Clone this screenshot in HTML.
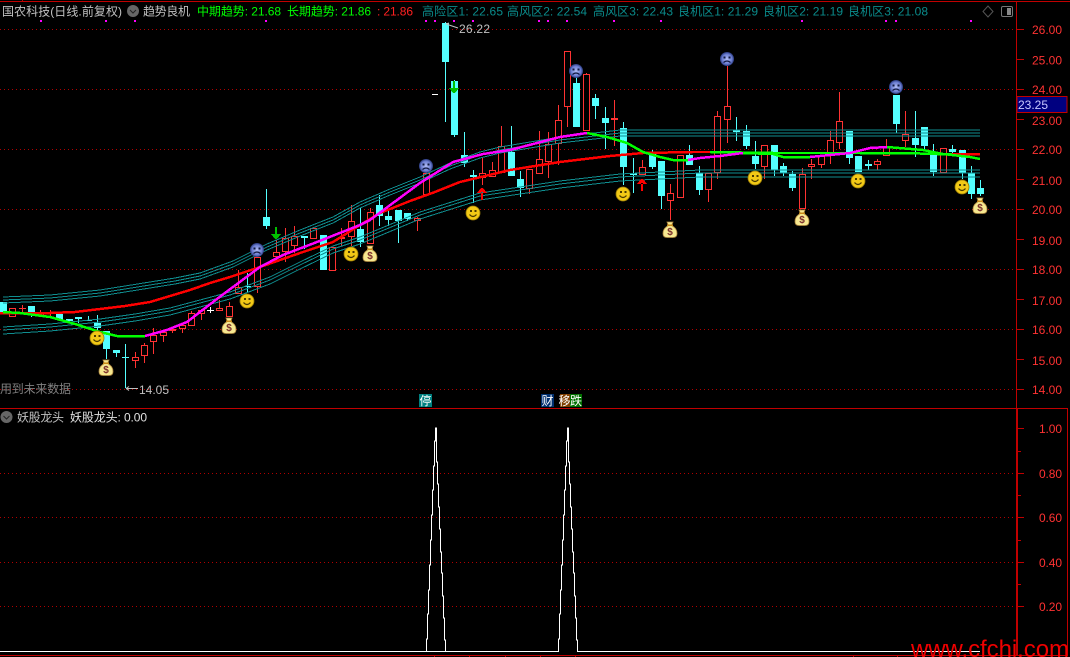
<!DOCTYPE html>
<html><head><meta charset="utf-8"><style>
html,body{margin:0;padding:0;background:#000;width:1070px;height:657px;overflow:hidden}
svg{display:block}
text{font-family:"Liberation Sans","WenQuanYi Zen Hei","Noto Sans CJK SC",sans-serif;font-size:12px}
.c{shape-rendering:crispEdges}
</style></head><body>
<svg width="1070" height="657" viewBox="0 0 1070 657" xmlns="http://www.w3.org/2000/svg">
<defs>
<radialGradient id="sad"><stop offset="0" stop-color="#b0bcf4"/><stop offset=".7" stop-color="#6a7cd0"/><stop offset="1" stop-color="#28387c"/></radialGradient>
<g id="smile"><circle r="7" fill="#f2c916" stroke="#9a7c06" stroke-width=".8"/><rect x="-3" y="-3" width="2" height="2" fill="#4a3a00"/><rect x="1.5" y="-3" width="2" height="2" fill="#4a3a00"/><path d="M-3.5 1.5Q0 5.5 3.5 1.5" fill="none" stroke="#4a3a00" stroke-width="1.2"/></g>
<g id="sadf"><circle r="7" fill="url(#sad)"/><rect x="-3.5" y="-2.5" width="2" height="2" fill="#101840"/><rect x="1.5" y="-2.5" width="2" height="2" fill="#101840"/><path d="M-3.5 3.5Q0 .5 3.5 3.5" fill="none" stroke="#101840" stroke-width="1.2"/></g>
<g id="bag"><path d="M-3-8h6l-1.5 3.5Q7-2 7 3.5 7 7.5 3 7.500h-6Q-7 7.500-7 3.500-7-2-1.500-4.500z" fill="#f6e890" stroke="#b08840" stroke-width=".8"/><rect x="-3" y="-5.500" width="6" height="1.500" fill="#c88a18"/><text x="0" y="5" text-anchor="middle" fill="#7a2c2c" style="font-size:10px;font-weight:bold">$</text></g>
<path id="up" d="M3 300L50 298L100 293L125 289L150 285L175 281L200 276L233 264L267 247L300 233L333 220L360 205L390 192L420 180L450 166L480 155L500 150L560 140L620 133L700 133L980 133" fill="none"/>
<path id="lo" d="M3 330L50 327L100 322L135 317L170 311L200 303L230 295L270 280L300 265L333 249L360 240L420 215L480 196L560 184L620 177L700 173L980 173" fill="none"/>
<g id="peak"><path d="M0 651.500H426.500V639H427.500V614H428.500V590H429.500V565H430.500V540H431.500V515H432.500V490H433.500V466H434.500V441H435.500V428H436.500V462H437.500V484H438.500V507H439.500V529H440.500V552H441.500V573H442.500V596H443.500V618H444.500V640H445.500V651.500" fill="none" stroke="#fff" stroke-width="1"/></g>
</defs>
<rect width="1070" height="657" fill="#000"/>
<!-- dotted grid -->
<g class="c" stroke="#b00000" stroke-dasharray="1 3" stroke-width="1">
<path d="M0 29.500H1016M0 89.500H1016M0 149.500H1016M0 209.500H1016M0 269.500H1016M0 329.500H1016M0 389.500H1016M0 473.500H1016M0 517.500H1016M0 562.500H1016M0 606.500H1016"/>
</g>
<!-- frame -->
<g class="c" fill="#c00000">
<rect x="0" y="1" width="1070" height="1"/><rect x="22" y="0" width="1" height="1"/>
<rect x="0" y="408" width="1068" height="1"/><rect x="0" y="655" width="1068" height="1"/>
<rect x="1016" y="2" width="1" height="406"/><rect x="1017" y="408" width="1" height="248"/><rect x="1016" y="408" width="1" height="248"/>
<rect x="1067" y="408" width="1" height="248"/>
<path d="M1017 29h7v1h-7zM1017 59h7v1h-7zM1017 89h7v1h-7zM1017 119h7v1h-7zM1017 149h7v1h-7zM1017 179h7v1h-7zM1017 209h7v1h-7zM1017 239h7v1h-7zM1017 269h7v1h-7zM1017 299h7v1h-7zM1017 329h7v1h-7zM1017 359h7v1h-7zM1017 389h7v1h-7z"/>
<path d="M1018 428h6v1h-6zM1018 473h6v1h-6zM1018 517h6v1h-6zM1018 562h6v1h-6zM1018 606h6v1h-6zM1018 451h3v1h-3zM1018 495h3v1h-3zM1018 540h3v1h-3zM1018 584h3v1h-3z"/>
<path d="M434 656h1v1h-1zM469 656h1v1h-1zM505 656h1v1h-1zM540 656h1v1h-1zM575 656h1v1h-1zM853 656h1v1h-1zM897 656h1v1h-1zM941 656h1v1h-1z"/>
</g>
<!-- magenta markers -->
<g class="c" fill="#ff00ff"><path d="M40 20h2v2h-2zM105 20h2v2h-2zM134 20h2v2h-2zM265 20h2v2h-2zM425 20h2v2h-2zM434 20h2v2h-2zM453 20h2v2h-2zM472 20h2v2h-2zM538 20h2v2h-2zM547 20h2v2h-2zM566 20h2v2h-2zM613 20h2v2h-2zM660 20h2v2h-2zM801 20h2v2h-2zM885 20h2v2h-2zM895 20h2v2h-2zM970 20h2v2h-2z"/></g>
<!-- cyan wicks -->
<g class="c" stroke="#54ffff" stroke-width="1" fill="none">
<path d="M31.500 306V317M59.500 314V320M69.500 319V323M78.500 317V323M88.500 316V320M97.500 315V330M106.500 331V359M116.500 350V357M125.500 344V388M247.500 273V292M266.500 189V229M304.500 237V249M323.500 235V270M360.500 208V247M379.500 195V226M388.500 210V226M398.500 210V243M407.500 213V221M445.500 22V122M454.500 80V137M464.500 132V167M473.500 170V203M511.500 126V176M520.500 171V197M576.500 65V127M595.500 94V119M605.500 107V149M623.500 122V185M633.500 158V193M652.500 150V169M661.500 161V209M689.500 145V165M699.500 166V195M736.500 117V141M746.500 125V149M755.500 141V169M774.500 145V176M783.500 163V176M792.500 171V191M849.500 131V164M858.500 156V172M868.500 160V170M896.500 95V133M915.500 111V157M924.500 127V149M933.500 144V176M952.500 145V153M962.500 150V179M971.500 166V199M980.500 180V196"/>
</g>
<!-- cyan bodies -->
<g class="c" fill="#54ffff">
<path d="M0 302h7v12h-7zM28 306h7v8h-7zM56 314h7v6h-7zM66 319h7v2h-7zM75 317h7v2h-7zM85 320h7v1h-7zM94 323h7v5h-7zM103 331h7v18h-7zM113 350h7v3h-7zM122 357h7v1h-7zM244 286h7v1h-7zM263 217h7v9h-7zM301 236h7v2h-7zM320 235h7v35h-7zM357 229h7v13h-7zM376 205h7v11h-7zM385 216h7v4h-7zM395 210h7v11h-7zM404 213h7v6h-7zM442 23h7v39h-7zM451 81h7v54h-7zM461 155h7v8h-7zM470 175h7v2h-7zM508 152h7v24h-7zM517 179h7v9h-7zM573 83h7v44h-7zM592 98h7v8h-7zM602 118h7v5h-7zM620 128h7v39h-7zM630 173h7v2h-7zM649 154h7v13h-7zM658 161h7v35h-7zM686 155h7v10h-7zM696 173h7v17h-7zM733 130h7v2h-7zM743 131h7v15h-7zM752 156h7v8h-7zM771 145h7v25h-7zM780 166h7v7h-7zM789 174h7v14h-7zM846 131h7v27h-7zM855 156h7v16h-7zM865 164h7v2h-7zM893 95h7v29h-7zM912 138h7v7h-7zM921 127h7v19h-7zM930 154h7v18h-7zM949 149h7v3h-7zM959 150h7v23h-7zM968 173h7v21h-7zM977 188h7v6h-7z"/>
</g>
<!-- white marks -->
<g class="c" fill="#fff"><path d="M207 310h7v1h-7zM210 307h1v6h-1zM432 94h6v1h-6z"/></g>
<!-- red wicks -->
<g class="c" stroke="#ff3232" stroke-width="1" fill="none">
<path d="M22.500 305V312M40.500 310V317M50.500 310V317M135.500 352V368M144.500 343V363M153.500 328V354M163.500 330V342M172.500 327V333M182.500 323V333M191.500 311V326M201.500 309V320M219.500 300V311M229.500 302V317M238.500 270V294M257.500 257V293M276.500 240V262M285.500 228V262M294.500 226V253M341.500 228V246M351.500 205V246M370.500 208V244M417.500 217V231M426.500 160V195M482.500 158V185M492.500 162V177M501.500 126V173M529.500 169V194M539.500 131V174M548.500 132V178M558.500 105V165M567.500 51V127M586.500 73V131M614.500 100V146M642.500 160V175M670.500 184V220M708.500 173V202M717.500 111V179M727.500 66V143M764.500 145V179M802.500 168V209M811.500 159V179M821.500 156V168M830.500 131V164M839.500 92V149M877.500 159V170M886.500 139V156M905.500 111V147"/>
<path d="M19 308.500h7M47 313.500h7"/>
</g>
<!-- red bodies -->
<g class="c" stroke="#ff3232" stroke-width="1" fill="#000">
<path d="M9.500 308.500h6v8h-6zM37.500 312.500h6v3h-6zM132.500 357.500h6v3h-6zM141.500 345.500h6v10h-6zM150.500 335.500h6v6h-6zM160.500 332.500h6v3h-6zM169.500 329.500h6v1h-6zM179.500 325.500h6v3h-6zM188.500 313.500h6v12h-6zM198.500 310.500h6v3h-6zM216.500 308.500h6v2h-6zM226.500 306.500h6v10h-6zM235.500 287.500h6v6h-6zM254.500 257.500h6v29h-6zM273.500 252.500h6v4h-6zM282.500 238.500h6v13h-6zM291.500 236.500h6v9h-6zM310.500 228.500h6v10h-6zM329.500 247.500h6v23h-6zM338.500 237.500h6v1h-6zM348.500 221.500h6v15h-6zM367.500 212.500h6v31h-6zM414.500 218.500h6v2h-6zM423.500 173.500h6v21h-6zM479.500 173.500h6v4h-6zM489.500 170.500h6v6h-6zM498.500 146.500h6v26h-6zM526.500 169.500h6v19h-6zM536.500 159.500h6v14h-6zM545.500 144.500h6v17h-6zM555.500 120.500h6v23h-6zM564.500 51.500h6v55h-6zM583.500 74.500h6v56h-6zM611.500 118.500h6v1h-6zM639.500 167.500h6v7h-6zM667.500 193.500h6v7h-6zM677.500 155.500h6v42h-6zM705.500 173.500h6v16h-6zM714.500 116.500h6v56h-6zM724.500 106.500h6v13h-6zM761.500 145.500h6v21h-6zM799.500 174.500h6v34h-6zM808.500 164.500h6v2h-6zM818.500 156.500h6v8h-6zM827.500 140.500h6v14h-6zM836.500 121.500h6v21h-6zM874.500 161.500h6v3h-6zM883.500 146.500h6v9h-6zM902.500 134.500h6v6h-6zM940.500 148.500h6v24h-6z"/>
</g>
<!-- channels -->
<g stroke="#0f8e90" stroke-width="1" class="c">
<use href="#up" y="-3"/><use href="#up"/><use href="#up" y="3"/>
<use href="#lo" y="-3"/><use href="#lo"/><use href="#lo" y="4"/>
</g>
<!-- long trend -->
<g fill="none" stroke-width="2.500" class="c">
<path stroke="#ff0000" d="M0 313L50 313L75 312L100 309L125 306L150 302L170 296L190 290L210 283L230 277L260 267L280 260L300 253L333 242L360 225L380 213L410 201L435 192L460 182L485 176L510 170L560 162L610 156L643 153L693 152L710 152"/>
<path stroke="#00ff00" d="M710 152L773 153L860 153L903 153L937 154L952 154"/>
<path stroke="#ff0000" d="M952 154L980 154"/>
<path stroke="#00ff00" d="M3 312L20 313L50 317L75 324L100 332L117 336L145 336"/>
<path stroke="#ff00ff" d="M145 336L167 330L187 322L213 302L233 287L260 267L283 255L317 242L360 225L370 220L393 203L420 183L453 162L483 154L510 150L560 137L587 133"/>
<path stroke="#00ff00" d="M587 133L607 137L627 143L643 152L660 157L673 160L688 160"/>
<path stroke="#ff00ff" d="M688 160L700 158L720 156L743 153"/>
<path stroke="#00ff00" d="M743 153L773 154L783 157L810 157"/>
<path stroke="#ff00ff" d="M810 157L850 153L870 148L887 147"/>
<path stroke="#00ff00" d="M887 147L923 150L943 154L970 157L980 159"/>
</g>
<!-- arrows -->
<g fill="#00c000" class="c"><path d="M271 234h10l-4 5h-2zM275 227h2v8h-2zM449 88h10l-4 5h-2zM453 81h2v8h-2z"/></g>
<g fill="#ff0000" class="c"><path d="M477 193h10l-4-5h-2zM481 192h2v8h-2zM637 184h10l-4-5h-2zM641 183h2v8h-2z"/></g>
<!-- icons -->
<use href="#smile" x="97" y="338"/><use href="#smile" x="247" y="301"/><use href="#smile" x="351" y="254"/><use href="#smile" x="473" y="213"/><use href="#smile" x="623" y="194"/><use href="#smile" x="755" y="178"/><use href="#smile" x="858" y="181"/><use href="#smile" x="962" y="187"/>
<use href="#sadf" x="257" y="250"/><use href="#sadf" x="426" y="166"/><use href="#sadf" x="576" y="71"/><use href="#sadf" x="727" y="59"/><use href="#sadf" x="896" y="87"/>
<use href="#bag" x="106" y="368"/><use href="#bag" x="229" y="326"/><use href="#bag" x="370" y="254"/><use href="#bag" x="670" y="230"/><use href="#bag" x="802" y="218"/><use href="#bag" x="980" y="206"/>
<!-- callouts -->
<g stroke="#c0c0c0" fill="none" stroke-width="1"><path d="M446 24L458 28M446 24l3-1M126 388.500H138M126 388.500l3-2M126 388.500l3 2"/></g>
<text x="459" y="33" fill="#c0c0c0" textLength="31">26.22</text>
<text x="139" y="394" fill="#c0c0c0" textLength="30">14.05</text>
<text x="0" y="393" fill="#808080" textLength="71">用到未来数据</text>
<!-- header -->
<text x="2" y="15.500" fill="#c0c0c0" textLength="120">国农科技(日线.前复权)</text>
<circle cx="133" cy="11" r="6" fill="#666"/><path d="M130 10l3 3 3-3" fill="none" stroke="#222" stroke-width="1"/>
<text x="143" y="15.500" fill="#c0c0c0" textLength="47">趋势良机</text>
<text x="197" y="15.500" fill="#00ff00" textLength="84">中期趋势: 21.68</text>
<text x="287" y="15.500" fill="#00ff00" textLength="84">长期趋势: 21.86</text>
<text x="377" y="15.500" fill="#ff2020" textLength="36">: 21.86</text>
<g fill="#0a8c8c">
<text x="422" y="15.500" textLength="81">高险区1: 22.65</text>
<text x="507" y="15.500" textLength="80">高风区2: 22.54</text>
<text x="593" y="15.500" textLength="80">高风区3: 22.43</text>
<text x="678" y="15.500" textLength="80">良机区1: 21.29</text>
<text x="763" y="15.500" textLength="80">良机区2: 21.19</text>
<text x="848" y="15.500" textLength="80">良机区3: 21.08</text>
</g>
<path d="M988 6l5 5.500-5 5.500-5-5.500z" fill="none" stroke="#555" stroke-width="1"/>
<rect x="1001.500" y="6.500" width="11" height="10" rx="1.500" fill="none" stroke="#777" stroke-width="1"/><rect x="1007" y="8" width="4" height="7" fill="#888"/>
<!-- axis labels -->
<g fill="#ff3232">
<text x="1032" y="34" textLength="30">26.00</text><text x="1032" y="64.500" textLength="30">25.00</text><text x="1032" y="94" textLength="30">24.00</text><text x="1032" y="125" textLength="30">23.00</text><text x="1032" y="154" textLength="30">22.00</text><text x="1032" y="185" textLength="30">21.00</text><text x="1032" y="214" textLength="30">20.00</text><text x="1032" y="245" textLength="30">19.00</text><text x="1032" y="274" textLength="30">18.00</text><text x="1032" y="305" textLength="30">17.00</text><text x="1032" y="334" textLength="30">16.00</text><text x="1032" y="365" textLength="30">15.00</text><text x="1032" y="394" textLength="30">14.00</text>
<text x="1039" y="433" textLength="23">1.00</text><text x="1039" y="478" textLength="23">0.80</text><text x="1039" y="522" textLength="23">0.60</text><text x="1039" y="567" textLength="23">0.40</text><text x="1039" y="611" textLength="23">0.20</text>
</g>
<rect x="1017" y="96.500" width="50" height="16" fill="#000080" stroke="#c00000" stroke-width="1" class="c"/>
<text x="1018" y="109" fill="#c8c8ff" textLength="30">23.25</text>
<!-- tags -->
<g class="c"><rect x="419" y="394" width="13" height="13" fill="#008080"/><rect x="541" y="394" width="13" height="13" fill="#003070"/><rect x="560" y="394" width="10" height="13" fill="#804000"/><rect x="570" y="394" width="12" height="13" fill="#007000"/></g>
<g fill="#fff"><text x="419.500" y="405">停</text><text x="541.500" y="405">财</text><text x="558.500" y="405">移</text><text x="570" y="405">跌</text></g>
<!-- lower pane header -->
<circle cx="6.500" cy="417" r="6" fill="#666"/><path d="M3.500 416l3 3 3-3" fill="none" stroke="#222" stroke-width="1"/>
<text x="17" y="421.500" fill="#c0c0c0" textLength="47">妖股龙头</text>
<text x="70" y="421.500" fill="#e0e0e0" textLength="77">妖股龙头: 0.00</text>
<!-- indicator -->
<g class="c">
<use href="#peak"/>
<path d="M445.500 651.500H558" stroke="#fff" stroke-width="1"/>
<use href="#peak" x="132"/>
<path d="M577 651.500H980" stroke="#fff" stroke-width="1"/>
</g>
<!-- watermark -->
<text x="911" y="657" fill="#f00000" style="font-size:24px" textLength="158">www.cfchi.com</text>
</svg>
</body></html>
